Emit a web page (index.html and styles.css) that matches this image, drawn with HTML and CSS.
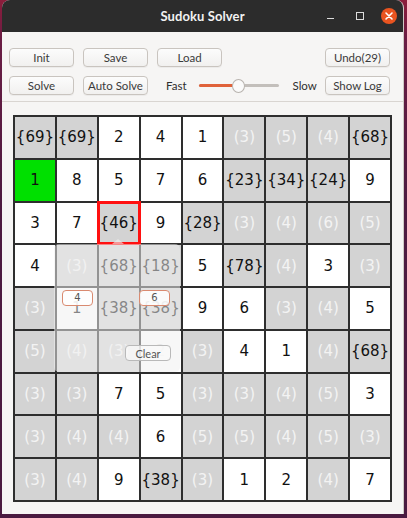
FILE: index.html
```html
<!DOCTYPE html>
<html>
<head>
<meta charset="utf-8">
<link rel="stylesheet" href="styles.css">
</head>
<body>
<div class="window">
  <div class="titlebar">
    <div class="title">Sudoku Solver</div>
    <div class="controls">
      <span class="ctl-min"></span>
      <span class="ctl-max"></span>
      <span class="ctl-close">
        <svg width="16" height="16" viewBox="0 0 16 16"><path d="M5 5 L11 11 M11 5 L5 11" stroke="#fff" stroke-width="1.6" stroke-linecap="round"/></svg>
      </span>
    </div>
  </div>
  <div class="toolbar">
    <div class="tb-row">
      <button class="btn">Init</button>
      <button class="btn">Save</button>
      <button class="btn">Load</button>
      <button class="btn btn-right">Undo(29)</button>
    </div>
    <div class="tb-row">
      <button class="btn">Solve</button>
      <button class="btn">Auto Solve</button>
      <span class="lbl lbl-fast">Fast</span>
      <div class="slider">
        <div class="track"><div class="fill"></div></div>
        <div class="knob"></div>
      </div>
      <span class="lbl lbl-slow">Slow</span>
      <button class="btn btn-right">Show Log</button>
    </div>
  </div>
  <div class="board-area">
    <div class="board">
      <div class="c k">{69}</div><div class="c k">{69}</div><div class="c v">2</div><div class="c v">4</div><div class="c v">1</div><div class="c p">(3)</div><div class="c p">(5)</div><div class="c p">(4)</div><div class="c k">{68}</div>
      <div class="c fix">1</div><div class="c v">8</div><div class="c v">5</div><div class="c v">7</div><div class="c v">6</div><div class="c k">{23}</div><div class="c k">{34}</div><div class="c k">{24}</div><div class="c v">9</div>
      <div class="c v">3</div><div class="c v">7</div><div class="c k sel">{46}</div><div class="c v">9</div><div class="c k">{28}</div><div class="c p">(3)</div><div class="c p">(4)</div><div class="c p">(6)</div><div class="c p">(5)</div>
      <div class="c v">4</div><div class="c p">(3)</div><div class="c k">{68}</div><div class="c k">{18}</div><div class="c v">5</div><div class="c k">{78}</div><div class="c p">(4)</div><div class="c v">3</div><div class="c p">(3)</div>
      <div class="c p">(3)</div><div class="c v">1</div><div class="c k">{38}</div><div class="c k">{38}</div><div class="c v">9</div><div class="c v">6</div><div class="c p">(3)</div><div class="c p">(4)</div><div class="c v">5</div>
      <div class="c p">(5)</div><div class="c p">(4)</div><div class="c p">(3)</div><div class="c v faint">2</div><div class="c p">(3)</div><div class="c v">4</div><div class="c v">1</div><div class="c p">(4)</div><div class="c k">{68}</div>
      <div class="c p">(3)</div><div class="c p">(3)</div><div class="c v">7</div><div class="c v">5</div><div class="c p">(3)</div><div class="c p">(3)</div><div class="c p">(4)</div><div class="c p">(5)</div><div class="c v">3</div>
      <div class="c p">(3)</div><div class="c p">(4)</div><div class="c p">(4)</div><div class="c v">6</div><div class="c p">(5)</div><div class="c p">(5)</div><div class="c p">(4)</div><div class="c p">(5)</div><div class="c p">(3)</div>
      <div class="c p">(3)</div><div class="c p">(4)</div><div class="c v">9</div><div class="c k">{38}</div><div class="c p">(3)</div><div class="c v">1</div><div class="c v">2</div><div class="c p">(4)</div><div class="c v">7</div>

      <div class="popup">
        <div class="popup-arrow"></div>
        <button class="pick pick-4">4</button>
        <button class="pick pick-6">6</button>
        <button class="clear">Clear</button>
      </div>
    </div>
  </div>
</div>
</body>
</html>
```

FILE: styles.css
```css
html, body {
  margin: 0;
  padding: 0;
}
body {
  width: 407px;
  height: 518px;
  overflow: hidden;
  background: linear-gradient(to bottom, #8c1d3b 0px, #6a1d44 40px, #4d1a40 200px, #4a1a40 100%);
  font-family: "Lato", "Noto Sans", sans-serif;
}
.window {
  margin-left: 2px;
  width: 401px;
  height: 514px;
  background: #f6f5f4;
  border-right: 1px solid #cfcac5;
  border-radius: 8px 8px 0 0;
  overflow: hidden;
  display: flex;
  flex-direction: column;
}
.titlebar {
  height: 32px;
  flex: none;
  background: #2c2c2c;
  position: relative;
  display: flex;
  align-items: center;
  justify-content: center;
}
.title {
  color: #f2f2f2;
  font-weight: bold;
  font-size: 13px;
  letter-spacing: 0.1px;
}
.controls {
  position: absolute;
  right: 6px;
  top: 0;
  height: 32px;
  display: flex;
  align-items: center;
}
.ctl-min {
  width: 7px;
  height: 1.5px;
  background: #dcdcdc;
  margin-right: 22px;
  margin-top: 5px;
}
.ctl-max {
  width: 6px;
  height: 6px;
  border: 1.3px solid #dcdcdc;
  margin-right: 17px;
}
.ctl-close {
  width: 16px;
  height: 16px;
  border-radius: 50%;
  background: #e95420;
  display: flex;
}
.toolbar {
  flex: none;
  padding: 16px 13px 6px 7px;
  border-bottom: 1px solid #d9d5d1;
  display: flex;
  flex-direction: column;
  gap: 9px;
}
.tb-row {
  display: flex;
  align-items: center;
  gap: 9px;
  height: 19px;
}
.btn {
  flex: none;
  width: 65px;
  height: 19px;
  padding: 0;
  font-family: "Lato", "Noto Sans", sans-serif;
  font-size: 11.5px;
  color: #3a3a3a;
  background: linear-gradient(#fcfcfc, #f1f0ef);
  border: 1px solid #c9c4bf;
  border-radius: 4px;
  box-shadow: 0 1px 0 rgba(0,0,0,0.04);
}
.btn-right {
  margin-left: auto;
}
.lbl {
  flex: none;
  font-size: 11.5px;
  color: #2e2e2e;
}
.lbl-fast {
  margin-left: 9px;
}
.slider {
  flex: none;
  position: relative;
  width: 80px;
  height: 14px;
  margin-left: 3px;
}
.track {
  position: absolute;
  left: 0;
  right: 0;
  top: 5px;
  height: 3px;
  border-radius: 2px;
  background: #c3bfbb;
}
.fill {
  width: 36px;
  height: 3px;
  border-radius: 2px;
  background: #e0623a;
}
.knob {
  position: absolute;
  left: 33px;
  top: 0;
  width: 11px;
  height: 12px;
  border-radius: 50%;
  background: #fafafa;
  border: 1px solid #b8b3ae;
}
.lbl-slow {
  margin-left: 5px;
  margin-right: -6px;
}
.board-area {
  flex: 1;
  padding: 13px 0 0 11px;
}
.board {
  position: relative;
  width: 379px;
  height: 387px;
  box-sizing: border-box;
  padding: 2px;
  background: #2e2e2e;
  display: grid;
  grid-template-columns: repeat(9, 1fr);
  grid-template-rows: repeat(9, 1fr);
  gap: 2px;
}
.c {
  display: flex;
  align-items: center;
  justify-content: center;
  font-family: "DejaVu Sans", sans-serif;
  font-size: 15px;
  color: #111;
  overflow: visible;
  white-space: nowrap;
}
.v {
  background: #ffffff;
}
.k {
  background: #d3d3d3;
}
.p {
  background: #d3d3d3;
  color: #f3f3f3;
}
.fix {
  background: #00e000;
}
.faint {
  color: #dcdcdc;
}
.sel {
  position: relative;
  z-index: 1;
  outline: 3px solid #ff1010;
  outline-offset: -1px;
}
.popup {
  position: absolute;
  left: 41px;
  top: 129px;
  width: 126px;
  height: 128px;
  border-radius: 5px;
  background: rgba(240, 240, 240, 0.52);
  z-index: 2;
}
.popup-arrow {
  position: absolute;
  left: 58px;
  top: -5px;
  width: 0;
  height: 0;
  border-left: 6px solid transparent;
  border-right: 6px solid transparent;
  border-bottom: 5px solid rgba(240, 240, 240, 0.6);
}
.pick {
  position: absolute;
  top: 46px;
  width: 31px;
  height: 16px;
  padding: 0;
  font-family: "DejaVu Sans", sans-serif;
  font-size: 10px;
  line-height: 12px;
  color: #555;
  background: rgba(255,255,255,0.85);
  border: 1.5px solid #d98a70;
  border-radius: 4px;
}
.pick-4 {
  left: 8px;
}
.pick-6 {
  left: 85px;
}
.clear {
  position: absolute;
  left: 71px;
  top: 101px;
  width: 46px;
  height: 16px;
  padding: 0;
  font-family: "Lato", "Noto Sans", sans-serif;
  font-size: 11px;
  color: #555;
  background: rgba(250,250,250,0.75);
  border: 1px solid #b9b9b9;
  border-radius: 4px;
}
```
